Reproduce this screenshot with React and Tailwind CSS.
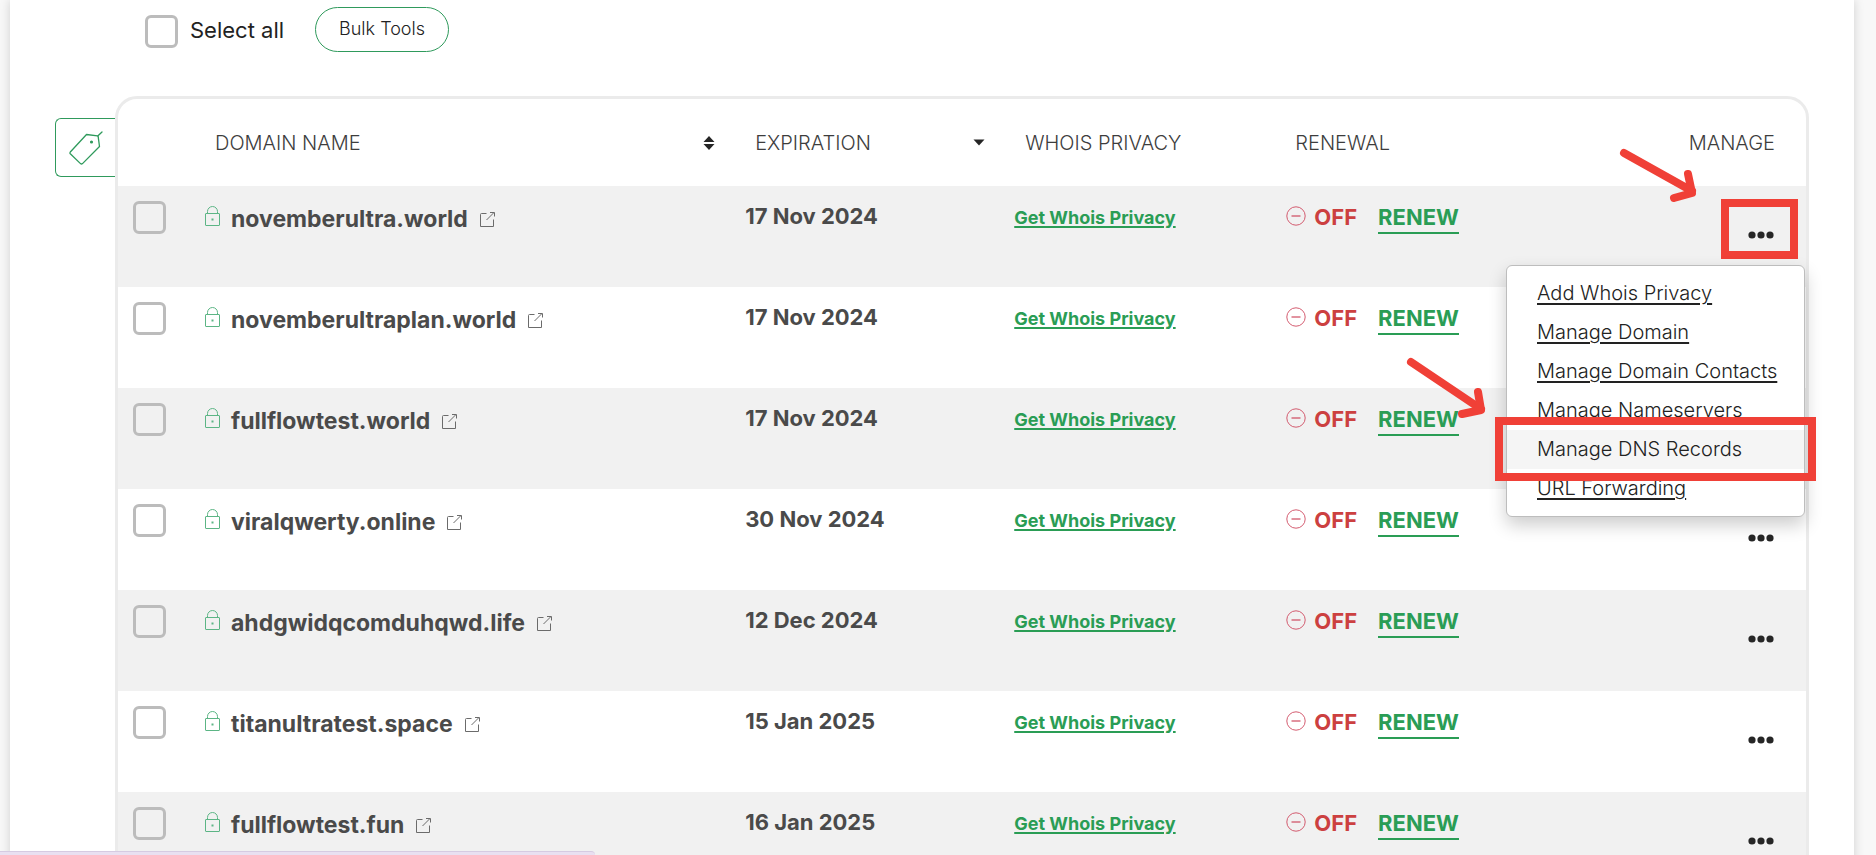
const domains = [
  { name: "novemberultra.world", expires: "17 Nov 2024" },
  { name: "novemberultraplan.world", expires: "17 Nov 2024" },
  { name: "fullflowtest.world", expires: "17 Nov 2024" },
  { name: "viralqwerty.online", expires: "30 Nov 2024" },
  { name: "ahdgwidqcomduhqwd.life", expires: "12 Dec 2024" },
  { name: "titanultratest.space", expires: "15 Jan 2025" },
  { name: "fullflowtest.fun", expires: "16 Jan 2025" },
];

const menuItems = [
  "Add Whois Privacy",
  "Manage Domain",
  "Manage Domain Contacts",
  "Manage Nameservers",
  "Manage DNS Records",
  "URL Forwarding",
];

const openRow = 0;
const activeItem = "Manage DNS Records";

function Checkbox({ id, label }) {
  return (
    <input
      id={id}
      type="checkbox"
      aria-label={label}
      className="block size-[33px] shrink-0 appearance-none rounded-md border-[3px] border-[#bcbcbc] checked:bg-[#2a9d55]"
    />
  );
}

function TagIcon() {
  return (
    <svg width="34" height="34" viewBox="0 0 34 34" fill="none" stroke="#2f9a5c" strokeWidth="1.3" strokeLinejoin="round" strokeLinecap="round" aria-hidden="true">
      <path d="M17.5 3.500 28.500 4.800Q29.200 5 29.200 5.800L30.500 15.500 13.500 32.600Q12.500 33.500 11.500 32.600L1.300 22.800Q.6 22 1.300 21Z" />
      <path d="M29 4.800 33 1" />
      <circle cx="22.500" cy="11" r="0.900" fill="#2f9a5c" />
    </svg>
  );
}

function LockIcon() {
  return (
    <svg className="mb-1.5 block shrink-0" width="15" height="20" viewBox="0 0 15 20" fill="none" stroke="#5cb585" strokeWidth="1" aria-hidden="true">
      <rect x="0.5" y="7.500" width="14" height="12" rx="0.500" />
      <path d="M2.500 7.500V5.500a5 5 0 0 1 10 0V7.500" />
      <rect x="7" y="13" width="1" height="1" />
    </svg>
  );
}

function ExternalIcon() {
  return (
    <svg className="block shrink-0" width="15" height="15" viewBox="0 0 15 15" fill="none" stroke="#6b6b6b" strokeWidth="1" aria-hidden="true">
      <path d="M6.500 1.500H1.500Q.5 1.500.5 2.500V14.500H13.500V7.500" />
      <path d="M6.500 8 13.500 1M10 .5H14.500V4.500" />
    </svg>
  );
}

function MinusCircleIcon() {
  return (
    <svg className="block shrink-0" width="20" height="20" viewBox="0 0 20 20" fill="none" stroke="#cf4a60" aria-hidden="true">
      <circle cx="10" cy="10" r="9.200" strokeWidth="0.900" />
      <path d="M5.500 10H14.500" strokeWidth="1.200" />
    </svg>
  );
}

function DotsIcon() {
  return (
    <svg className="block" width="26" height="8" viewBox="0 0 26 8" fill="#262626" aria-hidden="true">
      <circle cx="4" cy="4" r="3.600" />
      <circle cx="13" cy="4" r="3.600" />
      <circle cx="22" cy="4" r="3.600" />
    </svg>
  );
}

function ArrowMark({ className, shaft, head, width, height }) {
  return (
    <svg className={className} width={width} height={height} viewBox={`0 0 ${width} ${height}`} fill="none" stroke="#f04037" strokeWidth="8" strokeLinecap="round" strokeLinejoin="round" aria-hidden="true">
      <path d={shaft} />
      <path d={head} />
    </svg>
  );
}

function ManageMenu() {
  return (
    <div className="absolute top-[79px] right-px z-10 w-[299px] rounded-md border border-[#bdbdbd] bg-white py-2 shadow-[0_8px_18px_rgba(0,0,0,0.2)]">
      <ul>
        {menuItems.map((item) => (
          <li key={item} className="relative">
            <a
              href="#"
              className={
                item === activeItem
                  ? "block h-[39px] bg-[#f5f5f5] px-[30px] text-xl leading-[38px] font-light whitespace-nowrap text-[#222]"
                  : "block h-[39px] px-[30px] text-xl leading-[38px] font-light whitespace-nowrap text-[#222] underline decoration-2 underline-offset-3"
              }
            >
              {item}
            </a>
            {item === activeItem && (
              <>
                <span className="pointer-events-none absolute -inset-x-3 -top-[13px] -bottom-3 z-10 border-8 border-[#f04037]" />
                <ArrowMark
                  className="pointer-events-none absolute -top-[74px] -left-[101px] z-10"
                  width={82}
                  height={65}
                  shaft="M5 6 75 53"
                  head="M72 36 75 54 56 58"
                />
              </>
            )}
          </li>
        ))}
      </ul>
    </div>
  );
}

function HeaderCell({ children, className = "" }) {
  return <th scope="col" className={`text-left text-xl font-light text-[#3d3d3d] ${className}`}>{children}</th>;
}

function DomainRow({ domain, index }) {
  const open = index === openRow;
  return (
    <tr className="h-[101px] align-top odd:bg-[#f1f1f1]">
      <td className="pt-[15px] pl-[15px]">
        <Checkbox label={`Select ${domain.name}`} />
      </td>
      <td className="pt-[17px] pl-[10px]">
        <div className="flex items-center">
          <LockIcon />
          <a href="#" className="ml-[11px] text-[23px] leading-8 font-bold text-[#4a4a4a]">{domain.name}</a>
          <a href="#" aria-label={`Open ${domain.name}`} className="ml-3">
            <ExternalIcon />
          </a>
        </div>
      </td>
      <td className="pt-4 pl-[10px] text-[22px] leading-7 font-bold text-[#4a4a4a]">{domain.expires}</td>
      <td className="pt-4 pl-[9px]">
        <a href="#" className="text-lg leading-8 font-bold text-[#2a9d55] underline decoration-2 underline-offset-2">Get Whois Privacy</a>
      </td>
      <td className="pt-[17px] pl-[11px]">
        <div className="flex items-start">
          <span className="pt-[3px]">
            <MinusCircleIcon />
          </span>
          <span className="ml-2 text-[22px] leading-[29px] font-bold text-[#cc4040]">OFF</span>
          <a href="#" className="ml-[21px] border-b-2 border-[#2a9d55] text-[22px] leading-[29px] font-bold text-[#2a9d55]">RENEW</a>
        </div>
      </td>
      <td className="relative pt-[45px] pr-8">
        <div className="flex justify-end">
          <button type="button" aria-label={`Manage ${domain.name}`} className="relative block">
            <DotsIcon />
            {open && (
              <>
                <span className="pointer-events-none absolute -top-8 -right-6 -bottom-5 -left-[27px] border-8 border-[#f04037]" />
                <ArrowMark
                  className="pointer-events-none absolute -top-[84px] -left-[130px]"
                  width={80}
                  height={60}
                  shaft="M6 6 74 44"
                  head="M70 27 74 46 56 51"
                />
              </>
            )}
          </button>
        </div>
        {open && <ManageMenu />}
      </td>
    </tr>
  );
}

export default function App() {
  return (
    <div className="h-screen overflow-hidden bg-[#f8f8f8] pr-[22px] pl-[10px] font-['Inter','Open_Sans',sans-serif]">
      <main className="min-h-screen bg-white px-[45px] pt-[7px] shadow-[0_0_10px_rgba(0,0,0,0.16)]">
        <div className="flex items-start pl-[90px]">
          <div className="flex items-start pt-2">
            <Checkbox id="select-all" />
            <label htmlFor="select-all" className="pl-3 text-[22px] leading-[30px] text-[#222]">Select all</label>
          </div>
          <button type="button" className="ml-[31px] h-[45px] rounded-full border border-[#2f9a5c] px-[23px] pb-0.5 text-lg font-light text-[#222]">
            Bulk Tools
          </button>
        </div>

        <div className="mt-11 flex items-start">
          <button type="button" aria-label="Tags" className="mt-[22px] flex h-[59px] w-[60px] shrink-0 items-center justify-center rounded-l-md border border-r-0 border-[#2f9a5c]">
            <TagIcon />
          </button>
          <div className="min-w-0 flex-1 rounded-t-[22px] border-[3px] border-[#ebebeb]">
            <table className="w-full table-fixed border-collapse">
              <colgroup>
                <col className="w-[77px]" />
                <col className="w-[32%]" />
                <col className="w-[16%]" />
                <col className="w-[16%]" />
                <col className="w-[16%]" />
                <col />
              </colgroup>
              <thead>
                <tr className="h-[87px]">
                  <td />
                  <HeaderCell className="pl-5">
                    <div className="flex items-center justify-between pr-5">
                      DOMAIN NAME
                      <svg width="12" height="14" viewBox="0 0 12 14" fill="#262626" aria-hidden="true">
                        <path d="M6 0 11.500 6H.5ZM.5 8H11.500L6 14Z" />
                      </svg>
                    </div>
                  </HeaderCell>
                  <HeaderCell className="pl-5">
                    <div className="flex items-center justify-between pr-5">
                      EXPIRATION
                      <svg width="12" height="14" viewBox="0 0 12 14" fill="#262626" aria-hidden="true">
                        <path d="M.5 3.500H11.500L6 9.500Z" />
                      </svg>
                    </div>
                  </HeaderCell>
                  <HeaderCell className="pl-5">WHOIS PRIVACY</HeaderCell>
                  <HeaderCell className="pl-5">RENEWAL</HeaderCell>
                  <HeaderCell>
                    <div className="pr-[31px] text-right">MANAGE</div>
                  </HeaderCell>
                </tr>
              </thead>
              <tbody>
                {domains.map((domain, index) => (
                  <DomainRow key={domain.name} domain={domain} index={index} />
                ))}
              </tbody>
            </table>
          </div>
        </div>
      </main>
      <div className="fixed bottom-0 left-0 h-1 w-[595px] rounded-tr-md border-t border-[#d6cbe2] bg-[#e9e0f1]" />
    </div>
  );
}
